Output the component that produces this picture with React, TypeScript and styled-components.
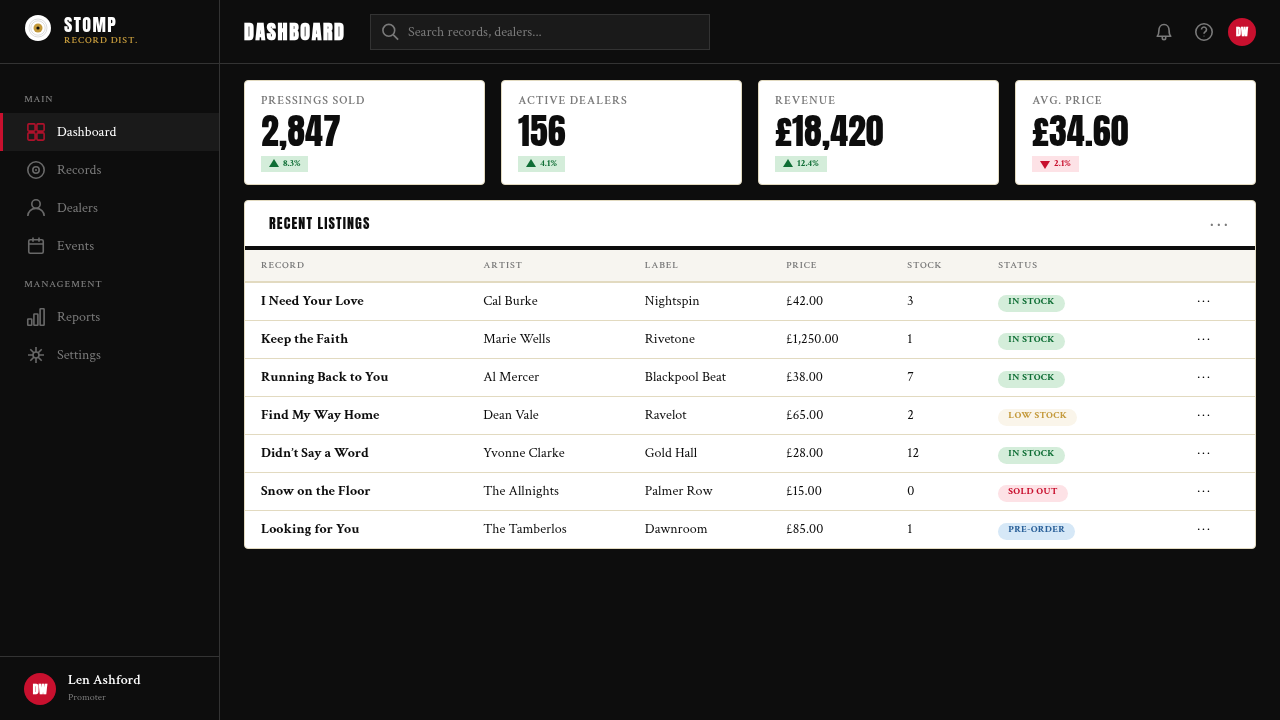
import React from 'react';
import styled, { createGlobalStyle } from 'styled-components';

const ink = '#0d0d0d';
const panel = '#1a1a1a';
const line = '#333333';
const muted = '#7a7a7a';
const red = '#c8102e';
const gold = '#c49a3c';
const sand = '#e2dac0';
const display = "Anton, 'Liberation Sans Narrow', 'Liberation Sans', sans-serif";
const serif = "'Crimson Text', 'Crimson Pro', 'Liberation Serif', serif";

const GlobalStyle = createGlobalStyle`
  *, *::before, *::after { box-sizing: border-box; }
  body {
    margin: 0;
    background: ${ink};
    color: ${ink};
    font: 14px/20px ${serif};
    -webkit-font-smoothing: antialiased;
  }
  button, input { font: inherit; }
  button { border: 0; background: none; cursor: pointer; }
  h1, h2, p { margin: 0; }
`;

const Shell = styled.div`
  display: grid;
  grid-template-columns: 220px minmax(0, 1fr);
  min-height: 100vh;
  will-change: transform;
`;

const Sidebar = styled.aside`
  display: flex;
  flex-direction: column;
  border-right: 1px solid ${line};
`;

const Brand = styled.div`
  display: flex;
  align-items: flex-start;
  gap: 12px;
  height: 64px;
  padding: 14px 24px;
  border-bottom: 1px solid ${line};
`;

const BrandName = styled.div`
  color: #fff;
  font: 400 18px/22px ${display};
  letter-spacing: 0.08em;
`;

const BrandTag = styled.div`
  color: ${gold};
  font-size: 10px;
  font-weight: 600;
  line-height: 10px;
  letter-spacing: 0.08em;
`;

const Nav = styled.nav`
  flex: 1;
  padding-top: 16px;
`;

const NavLabel = styled.div`
  padding: 13px 24px 6px;
  color: ${muted};
  font-size: 10px;
  line-height: 14px;
  font-weight: 600;
  letter-spacing: 0.08em;
`;

const NavItem = styled.a<{ $active?: boolean }>`
  display: flex;
  align-items: center;
  gap: 11px;
  height: 38px;
  padding-left: 23px;
  border-left: 3px solid ${p => (p.$active ? red : 'transparent')};
  background: ${p => (p.$active ? panel : 'transparent')};
  color: ${p => (p.$active ? '#fff' : muted)};
  text-decoration: none;
  svg { color: ${p => (p.$active ? red : muted)}; opacity: 0.85; }
`;

const Profile = styled.div`
  display: flex;
  align-items: center;
  gap: 12px;
  height: 64px;
  padding: 0 24px;
  border-top: 1px solid ${line};
`;

const ProfileText = styled.div`
  padding-bottom: 2px;
`;

const Avatar = styled.span<{ $small?: boolean }>`
  display: grid;
  place-items: center;
  width: ${p => (p.$small ? 28 : 32)}px;
  height: ${p => (p.$small ? 28 : 32)}px;
  border-radius: 50%;
  background: ${red};
  color: #fff;
  font: 700 ${p => (p.$small ? 10 : 12)}px/16px ${display};
`;

const ProfileName = styled.div`
  color: #fff;
  font-weight: 600;
`;

const ProfileRole = styled.div`
  color: ${muted};
  font-size: 10px;
  line-height: 16px;
`;

const Topbar = styled.header`
  display: flex;
  align-items: center;
  height: 64px;
  padding: 0 24px;
  border-bottom: 1px solid ${line};
`;

const PageTitle = styled.h1`
  width: 126px;
  color: #fff;
  font: 700 20px/24px ${display};
  letter-spacing: 0.08em;
`;

const Search = styled.label`
  display: flex;
  align-items: center;
  gap: 8px;
  flex: 0 1 340px;
  height: 36px;
  padding: 0 9px;
  border: 1px solid ${line};
  background: ${panel};
  color: ${muted};
`;

const SearchInput = styled.input`
  flex: 1;
  min-width: 0;
  padding: 0;
  border: 0;
  outline: 0;
  background: none;
  color: #fff;
  &::placeholder { color: ${muted}; opacity: 1; }
`;

const Tools = styled.div`
  display: flex;
  align-items: center;
  gap: 8px;
  margin-left: auto;
`;

const ToolButton = styled.button`
  display: grid;
  place-items: center;
  width: 32px;
  height: 32px;
  padding: 0;
  color: ${muted};
`;

const AvatarButton = styled.button`
  padding: 0;
`;

const Content = styled.main`
  display: grid;
  gap: 15px;
  padding: 16px 24px;
`;

const Stats = styled.section`
  display: grid;
  grid-template-columns: repeat(4, minmax(0, 1fr));
  gap: 16px;
`;

const StatCard = styled.article`
  padding: 12px 16px;
  border: 1px solid ${sand};
  border-radius: 4px;
  background: #fff;
`;

const StatLabel = styled.div`
  color: ${muted};
  font-size: 12px;
  line-height: 16px;
  font-weight: 600;
  letter-spacing: 0.08em;
`;

const StatValue = styled.div`
  margin: 2px 0 5px;
  font: 400 36px/40px ${display};
`;

const Delta = styled.div<{ $down?: boolean }>`
  display: flex;
  align-items: center;
  gap: 4px;
  width: fit-content;
  height: 16px;
  padding: 0 8px;
  background: ${p => (p.$down ? '#fde2e6' : '#d4edda')};
  color: ${p => (p.$down ? red : '#0f6e35')};
  font-size: 10px;
  line-height: 14px;
  font-weight: 700;
`;

const Listings = styled.section`
  overflow: hidden;
  border: 1px solid ${sand};
  border-radius: 4px;
  background: #fff;
`;

const ListingsHead = styled.header`
  display: flex;
  align-items: center;
  justify-content: space-between;
  height: 49px;
  padding: 0 24px;
  border-bottom: 4px solid ${ink};
`;

const ListingsTitle = styled.h2`
  font: 400 14px/20px ${display};
  letter-spacing: 0.08em;
`;

const PanelMenu = styled.button`
  padding: 0;
  color: ${muted};
  font-size: 20px;
  letter-spacing: 3px;
`;

const Table = styled.table`
  width: 100%;
  border-collapse: separate;
  border-spacing: 0;
  table-layout: fixed;
`;

const Th = styled.th<{ $w: number }>`
  width: ${p => p.$w}%;
  height: 33px;
  padding: 0 16px;
  border-bottom: 2px solid ${sand};
  background: #f7f5f0;
  color: ${muted};
  font-size: 10px;
  line-height: 14px;
  font-weight: 600;
  letter-spacing: 0.08em;
  text-align: left;
`;

const Td = styled.td<{ $strong?: boolean }>`
  height: 38px;
  padding: 0 16px 2px;
  border-bottom: 1px solid ${sand};
  font-weight: ${p => (p.$strong ? 700 : 400)};
  white-space: nowrap;
  tr:last-child > & { height: 37px; border-bottom: 0; }
`;

const RowMenu = styled.button`
  padding: 0 7px;
  letter-spacing: 2px;
`;

type Status = 'IN STOCK' | 'LOW STOCK' | 'SOLD OUT' | 'PRE-ORDER';

const statusColors: Record<Status, [string, string]> = {
  'IN STOCK': ['#d4edda', '#0f6e35'],
  'LOW STOCK': ['#faf5ea', gold],
  'SOLD OUT': ['#fde2e6', red],
  'PRE-ORDER': ['#d6e8f7', '#2a6099'],
};

const Badge = styled.span<{ $status: Status }>`
  display: block;
  width: fit-content;
  height: 17px;
  margin-top: 5px;
  padding: 0 10px;
  border-radius: 9px;
  background: ${p => statusColors[p.$status][0]};
  color: ${p => statusColors[p.$status][1]};
  font-size: 10px;
  line-height: 14px;
  font-weight: 700;
  letter-spacing: 0.03em;
`;

const Icon = ({ children, size = 20 }: { children: React.ReactNode; size?: number }) => (
  <svg width={size} height={size} viewBox="0 0 20 20" fill="none" stroke="currentColor" strokeWidth="1.6" aria-hidden="true">
    {children}
  </svg>
);

const icons = {
  dashboard: (
    <Icon>
      <rect x="1.9" y="1.9" width="7.2" height="7.2" rx="1" />
      <rect x="10.9" y="1.9" width="7.2" height="7.2" rx="1" />
      <rect x="1.9" y="10.9" width="7.2" height="7.2" rx="1" />
      <rect x="10.9" y="10.9" width="7.2" height="7.2" rx="1" />
    </Icon>
  ),
  records: (
    <Icon>
      <circle cx="10" cy="10" r="8.2" />
      <circle cx="10" cy="10" r="3.2" />
      <circle cx="10" cy="10" r="1" fill="currentColor" stroke="none" />
    </Icon>
  ),
  dealers: (
    <Icon>
      <circle cx="10" cy="6" r="4.2" />
      <path d="M1.8 18c0-4.4 3.5-7.6 8.2-7.6s8.2 3.2 8.2 7.6" />
    </Icon>
  ),
  events: (
    <Icon>
      <rect x="2.75" y="3.75" width="14.5" height="13.5" rx="1.5" />
      <path d="M2.75 8h14.5M7 1.5v4.2M13 1.5v4.2" />
    </Icon>
  ),
  reports: (
    <Icon>
      <rect x="1.75" y="12" width="4" height="6.2" rx="0.5" />
      <rect x="7.9" y="7" width="4" height="11.2" rx="0.5" />
      <rect x="14.1" y="1.8" width="4" height="16.4" rx="0.5" />
    </Icon>
  ),
  settings: (
    <Icon>
      <circle cx="10" cy="10" r="3" />
      <path d="M10 2v5M10 13v5M2 10h5M13 10h5M4.3 4.3l3.5 3.5M12.2 12.2l3.5 3.5M4.3 15.7l3.5-3.5M12.2 7.8l3.5-3.5" />
    </Icon>
  ),
};

const VinylLogo = () => (
  <svg width="28" height="28" viewBox="0 0 28 28" aria-hidden="true">
    <circle cx="14" cy="14" r="13" fill="#fff" />
    <g fill="none" stroke="#c4c4c4" strokeWidth="0.6">
      <circle cx="14" cy="14" r="9" />
      <circle cx="14" cy="14" r="7.2" />
    </g>
    <circle cx="14" cy="14" r="4.5" fill={gold} />
    <circle cx="14" cy="14" r="1.6" fill={ink} />
  </svg>
);

const stats = [
  { label: 'PRESSINGS SOLD', value: '2,847', delta: '8.3%' },
  { label: 'ACTIVE DEALERS', value: '156', delta: '4.1%' },
  { label: 'REVENUE', value: '£18,420', delta: '12.4%' },
  { label: 'AVG. PRICE', value: '£34.60', delta: '2.1%', down: true },
];

const columns: [string, number][] = [
  ['RECORD', 22], ['ARTIST', 16], ['LABEL', 14], ['PRICE', 12], ['STOCK', 9], ['STATUS', 19], ['', 8],
];

const rows: [string, string, string, string, number, Status][] = [
  ['I Need Your Love', 'Cal Burke', 'Nightspin', '£42.00', 3, 'IN STOCK'],
  ['Keep the Faith', 'Marie Wells', 'Rivetone', '£1,250.00', 1, 'IN STOCK'],
  ['Running Back to You', 'Al Mercer', 'Blackpool Beat', '£38.00', 7, 'IN STOCK'],
  ['Find My Way Home', 'Dean Vale', 'Ravelot', '£65.00', 2, 'LOW STOCK'],
  ['Didn’t Say a Word', 'Yvonne Clarke', 'Gold Hall', '£28.00', 12, 'IN STOCK'],
  ['Snow on the Floor', 'The Allnights', 'Palmer Row', '£15.00', 0, 'SOLD OUT'],
  ['Looking for You', 'The Tamberlos', 'Dawnroom', '£85.00', 1, 'PRE-ORDER'],
];

export default function App() {
  return (
    <>
      <GlobalStyle />
      <Shell>
        <Sidebar>
          <Brand>
            <VinylLogo />
            <div>
              <BrandName>STOMP</BrandName>
              <BrandTag>RECORD DIST.</BrandTag>
            </div>
          </Brand>
          <Nav>
            <NavLabel>MAIN</NavLabel>
            <NavItem href="#dashboard" $active aria-current="page">{icons.dashboard}Dashboard</NavItem>
            <NavItem href="#records">{icons.records}Records</NavItem>
            <NavItem href="#dealers">{icons.dealers}Dealers</NavItem>
            <NavItem href="#events">{icons.events}Events</NavItem>
            <NavLabel>MANAGEMENT</NavLabel>
            <NavItem href="#reports">{icons.reports}Reports</NavItem>
            <NavItem href="#settings">{icons.settings}Settings</NavItem>
          </Nav>
          <Profile>
            <Avatar>DW</Avatar>
            <ProfileText>
              <ProfileName>Len Ashford</ProfileName>
              <ProfileRole>Promoter</ProfileRole>
            </ProfileText>
          </Profile>
        </Sidebar>
        <div>
          <Topbar>
            <PageTitle>DASHBOARD</PageTitle>
            <Search>
              <Icon>
                <circle cx="8.8" cy="8.3" r="5.9" />
                <path d="M13.1 12.6l5 5" />
              </Icon>
              <SearchInput type="search" placeholder="Search records, dealers..." aria-label="Search" />
            </Search>
            <Tools>
              <ToolButton aria-label="Notifications">
                <Icon>
                  <path d="M3.2 14.3h13.6c-1.3-1.2-1.7-2.4-1.7-5.8C15.1 4.9 13 2.5 10 2.5S4.9 4.9 4.9 8.5c0 3.4-.4 4.6-1.7 5.8z" strokeLinejoin="round" />
                  <path d="M8.3 14.6v1.3a1.7 1.7 0 0 0 3.4 0v-1.3" />
                </Icon>
              </ToolButton>
              <ToolButton aria-label="Help">
                <Icon>
                  <circle cx="10" cy="10" r="8.2" />
                  <path d="M7.5 7.6a2.5 2.5 0 1 1 3.8 2.1c-.9.6-1.3 1-1.3 2" />
                  <circle cx="10" cy="14" r="0.6" fill="currentColor" stroke="none" />
                </Icon>
              </ToolButton>
              <AvatarButton aria-label="Account"><Avatar $small>DW</Avatar></AvatarButton>
            </Tools>
          </Topbar>
          <Content>
            <Stats>
              {stats.map(s => (
                <StatCard key={s.label}>
                  <StatLabel>{s.label}</StatLabel>
                  <StatValue>{s.value}</StatValue>
                  <Delta $down={s.down}>
                    <svg width="10" height="12" viewBox="0 0 10 12" fill="currentColor" aria-hidden="true">
                      <path d={s.down ? 'M0 3h10L5 11z' : 'M0 9h10L5 1z'} />
                    </svg>
                    {s.delta}
                  </Delta>
                </StatCard>
              ))}
            </Stats>
            <Listings>
              <ListingsHead>
                <ListingsTitle>RECENT LISTINGS</ListingsTitle>
                <PanelMenu aria-label="Listing options">···</PanelMenu>
              </ListingsHead>
              <Table>
                <thead>
                  <tr>{columns.map(([name, w]) => <Th key={name} $w={w} scope="col">{name}</Th>)}</tr>
                </thead>
                <tbody>
                  {rows.map(([record, artist, label, price, stock, status]) => (
                    <tr key={record}>
                      <Td $strong>{record}</Td>
                      <Td>{artist}</Td>
                      <Td>{label}</Td>
                      <Td>{price}</Td>
                      <Td>{stock}</Td>
                      <Td><Badge $status={status}>{status}</Badge></Td>
                      <Td><RowMenu aria-label={`Options for ${record}`}>···</RowMenu></Td>
                    </tr>
                  ))}
                </tbody>
              </Table>
            </Listings>
          </Content>
        </div>
      </Shell>
    </>
  );
}
